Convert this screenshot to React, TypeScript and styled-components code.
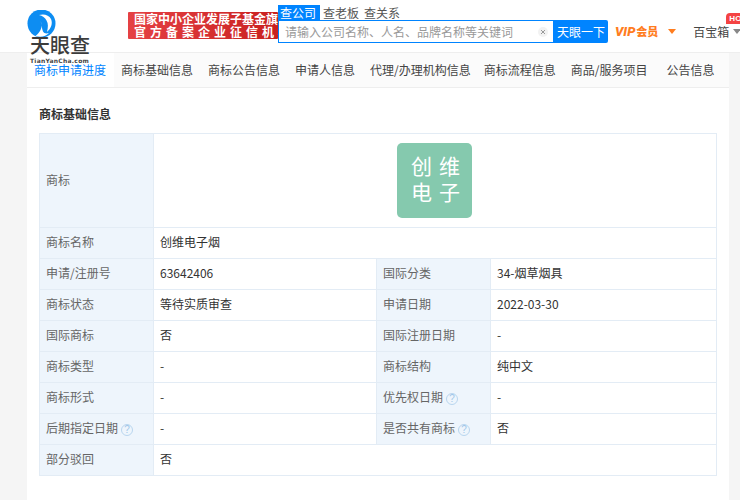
import React from 'react';
import styled, { createGlobalStyle } from 'styled-components';

const GlobalStyle = createGlobalStyle`
  html, body { margin: 0; padding: 0; background: #f5f5f5; }
  body {
    width: 740px;
    height: 500px;
    overflow: hidden;
    font-family: "Noto Sans CJK SC", "Liberation Sans", sans-serif;
    font-size: 12px;
    color: #333;
  }
`;

const Header = styled.header`
  display: flex;
  align-items: flex-start;
  height: 53px;
  background: #fff;
  border-bottom: 1px solid #eee;
  box-sizing: border-box;
  overflow: visible;
  position: relative;
  z-index: 1;
`;

const LogoWrap = styled.div`
  position: relative;
  flex: 0 0 128px;
  height: 53px;
`;

const LogoMark = styled.svg`
  position: absolute;
  left: 27px;
  top: 10px;
`;

const LogoName = styled.div`
  position: absolute;
  left: 30px;
  top: 34px;
  font-size: 20px;
  line-height: 22px;
  font-weight: 500;
  color: #3c3c3c;
  white-space: nowrap;
`;

const LogoPinyin = styled.div`
  position: absolute;
  left: 30px;
  top: 56px;
  font-family: "DejaVu Sans", sans-serif;
  font-size: 6px;
  line-height: 9px;
  font-weight: 700;
  letter-spacing: 0.25px;
  color: #444;
  white-space: nowrap;
`;

const Banner = styled.div`
  flex: 0 0 150px;
  width: 150px;
  height: 27px;
  margin-top: 12px;
  padding: 1px 0 0 6px;
  box-sizing: border-box;
  overflow: hidden;
  border-radius: 1px;
  background: linear-gradient(90deg, #e54144, #c9201f);
  color: #fff;
  font-weight: 700;
`;

const BannerLine = styled.div<{ $spread?: boolean }>`
  font-size: 12px;
  line-height: 12.5px;
  white-space: nowrap;
  letter-spacing: ${(p) => (p.$spread ? '4px' : '0')};
`;

const Search = styled.div`
  flex: 0 0 330px;
  margin-top: 5px;
`;

const SearchTabs = styled.div`
  display: flex;
  gap: 5px;
  height: 15px;
`;

const SearchTab = styled.span<{ $active?: boolean }>`
  padding: ${(p) => (p.$active ? '0 4px 0 2px' : '0')};
  margin-right: ${(p) => (p.$active ? '-2px' : '0')};
  background: ${(p) => (p.$active ? '#0084ff' : 'transparent')};
  color: ${(p) => (p.$active ? '#fff' : '#555')};
  font-size: 12px;
  line-height: 15px;
  white-space: nowrap;
`;

const SearchRow = styled.div`
  display: flex;
  height: 23px;
`;

const InputBox = styled.div`
  flex: 0 0 276px;
  display: flex;
  align-items: center;
  justify-content: space-between;
  box-sizing: border-box;
  padding: 0 5px 0 6px;
  border: 1px solid #0084ff;
  background: #fff;
`;

const Placeholder = styled.span`
  color: #999;
  font-size: 12px;
  white-space: nowrap;
`;

const ClearIcon = styled.svg`
  display: block;
`;

const SearchButton = styled.button`
  flex: 0 0 54px;
  padding: 0;
  border: none;
  border-radius: 0 2px 2px 0;
  background: #0084ff;
  color: #fff;
  font: inherit;
  font-size: 12px;
  white-space: nowrap;
`;

const Vip = styled.div`
  display: flex;
  align-items: center;
  margin: 21px 0 0 7px;
  height: 20px;
  color: #ff7d1f;
  font-weight: 700;
  white-space: nowrap;
`;

const VipLatin = styled.span`
  font-family: Roboto, "Liberation Sans", sans-serif;
  font-size: 13px;
  font-weight: 900;
  font-style: italic;
  margin-right: 1px;
`;

const VipLabel = styled.span`
  font-size: 11px;
  font-weight: 900;
`;

const Caret = styled.i<{ $color: string; $gap: number }>`
  display: block;
  margin-left: ${(p) => p.$gap}px;
  width: 0;
  height: 0;
  border-style: solid;
  border-width: 5px 4px 0;
  border-color: ${(p) => p.$color} transparent transparent;
`;

const Divider = styled.i`
  display: block;
  width: 1px;
  height: 14px;
  margin: 24px 8px 0 8px;
  background: #eee;
`;

const Toolbox = styled.div`
  position: relative;
  display: flex;
  align-items: center;
  height: 20px;
  margin: 21px 0 0 1px;
  color: #444;
  white-space: nowrap;
`;

const HotBadge = styled.span`
  position: absolute;
  left: 33px;
  top: -8px;
  width: 30px;
  height: 11px;
  padding-left: 3px;
  box-sizing: border-box;
  border-radius: 4px 4px 4px 0;
  background: #f44343;
  color: #fff;
  font-family: "Liberation Sans", sans-serif;
  font-size: 8px;
  font-weight: 700;
  line-height: 11px;
`;

const Panel = styled.main`
  margin: 0 11px 0 27px;
  height: 447px;
  background: #fff;
`;

const Nav = styled.nav`
  display: flex;
  height: 35px;
  box-sizing: border-box;
  padding-right: 13px;
  background: #fbfbfb;
  border-bottom: 1px solid #eee;
`;

const NavItem = styled.a<{ $active?: boolean; $offset?: number }>`
  display: block;
  padding: 0 7.5px 0 ${(p) => (p.$active ? '7px' : '7.5px')};
  margin-right: ${(p) => p.$offset ?? 0}px;
  background: ${(p) => (p.$active ? '#fff' : 'transparent')};
  color: ${(p) => (p.$active ? '#0084ff' : '#444')};
  font-size: 12px;
  line-height: 34px;
  white-space: nowrap;
`;

const Body = styled.section`
  padding: 17px 12px 0;
`;

const SectionTitle = styled.h2`
  margin: 0 0 11px;
  font-size: 12px;
  line-height: 17px;
  font-weight: 700;
  color: #333;
`;

const Table = styled.table`
  width: 677px;
  table-layout: fixed;
  border-collapse: collapse;
`;

const LabelCol = styled.col`
  width: 114px;
`;

const ValueCol = styled.col<{ $width: number }>`
  width: ${(p) => p.$width}px;
`;

const Th = styled.th`
  height: 31px;
  padding: 0 6px 3px;
  box-sizing: border-box;
  border: 1px solid #e3ecf5;
  background: #eef5fc;
  color: #666;
  font-weight: 400;
  font-size: 12px;
  text-align: left;
  white-space: nowrap;
`;

const Td = styled.td`
  height: 31px;
  padding: 0 6px 3px;
  box-sizing: border-box;
  border: 1px solid #e3ecf5;
  color: #333;
  font-size: 12px;
  white-space: nowrap;
`;

const MarkCell = styled(Td)`
  height: 94px;
  padding: 0 7px 0 6px;
`;

const Trademark = styled.div`
  width: 75px;
  height: 75px;
  margin: 0 auto;
  padding: 9px 0 0 14px;
  box-sizing: border-box;
  border-radius: 5px;
  background: #85c9ae;
  color: #fff;
  font-size: 21px;
  line-height: 26px;
  letter-spacing: 7px;
  text-align: left;
`;

const Help = styled.span`
  display: inline-block;
  width: 12px;
  height: 12px;
  margin-left: 3px;
  box-sizing: border-box;
  border: 1px solid #b9d6ef;
  border-radius: 50%;
  color: #a0c6e8;
  font-family: "Liberation Sans", sans-serif;
  font-size: 10px;
  line-height: 10px;
  text-align: center;
  vertical-align: 0;
`;

type Tab = { name: string; offset?: number };

const navItems: Tab[] = [
  { name: '商标基础信息' },
  { name: '商标公告信息' },
  { name: '申请人信息' },
  { name: '代理/办理机构信息', offset: -2 },
  { name: '商标流程信息' },
  { name: '商品/服务项目', offset: 4 },
];

type Cell = { label: string; value: string; help?: boolean };

const rows: [Cell, Cell][] = [
  [{ label: '申请/注册号', value: '63642406' }, { label: '国际分类', value: '34-烟草烟具' }],
  [{ label: '商标状态', value: '等待实质审查' }, { label: '申请日期', value: '2022-03-30' }],
  [{ label: '国际商标', value: '否' }, { label: '国际注册日期', value: '-' }],
  [{ label: '商标类型', value: '-' }, { label: '商标结构', value: '纯中文' }],
  [{ label: '商标形式', value: '-' }, { label: '优先权日期', value: '-', help: true }],
  [{ label: '后期指定日期', value: '-', help: true }, { label: '是否共有商标', value: '否', help: true }],
];

const Logo = () => (
  <LogoWrap>
    <LogoMark width="30" height="28" viewBox="0 0 30 28">
      <circle cx="14.500" cy="13.500" r="14" fill="#0d8df2" />
      <path d="M12 5c5-1.500 10 0 12 4 2 4.500 0 9.500-4 13 1-4.500 1.500-8.500-.5-11.500C18 7.500 15.500 6 12 5z" fill="#fff" />
      <path d="M13.500 11c1.500 3 1.500 6 0 9-1 2-2.500 4-5 6 5 1.500 10.500.5 13.500-3-2.500 1-5 .5-6-1.500-1.500-3-1-7-2.500-10.500z" fill="#fff" />
    </LogoMark>
    <LogoName>天眼查</LogoName>
    <LogoPinyin>TianYanCha.com</LogoPinyin>
  </LogoWrap>
);

const App: React.FC = () => (
  <>
    <GlobalStyle />
    <Header>
      <Logo />
      <Banner>
        <BannerLine>国家中小企业发展子基金旗下</BannerLine>
        <BannerLine $spread>官方备案企业征信机构</BannerLine>
      </Banner>
      <Search>
        <SearchTabs>
          <SearchTab $active>查公司</SearchTab>
          <SearchTab>查老板</SearchTab>
          <SearchTab>查关系</SearchTab>
        </SearchTabs>
        <SearchRow>
          <InputBox>
            <Placeholder>请输入公司名称、人名、品牌名称等关键词</Placeholder>
            <ClearIcon width="10" height="10" viewBox="0 0 10 10">
              <circle cx="5" cy="5" r="5" fill="#f2f2f2" />
              <path d="M3 3l4 4M7 3l-4 4" stroke="#999" strokeWidth="1" />
            </ClearIcon>
          </InputBox>
          <SearchButton>天眼一下</SearchButton>
        </SearchRow>
      </Search>
      <Vip>
        <VipLatin>VIP</VipLatin>
        <VipLabel>会员</VipLabel>
        <Caret $color="#ff7d1f" $gap={10} />
      </Vip>
      <Divider />
      <Toolbox>
        百宝箱
        <HotBadge>HOT</HotBadge>
        <Caret $color="#888" $gap={4} />
      </Toolbox>
    </Header>
    <Panel>
      <Nav>
        <NavItem $active>商标申请进度</NavItem>
        {navItems.map((item) => (
          <NavItem key={item.name} $offset={item.offset}>
            {item.name}
          </NavItem>
        ))}
        <NavItem>公告信息</NavItem>
      </Nav>
      <Body>
        <SectionTitle>商标基础信息</SectionTitle>
        <Table>
          <colgroup>
            <LabelCol />
            <ValueCol $width={223} />
            <LabelCol />
            <ValueCol $width={226} />
          </colgroup>
          <tbody>
            <tr>
              <Th>商标</Th>
              <MarkCell colSpan={3}>
                <Trademark>
                  创维
                  <br />
                  电子
                </Trademark>
              </MarkCell>
            </tr>
            <tr>
              <Th>商标名称</Th>
              <Td colSpan={3}>创维电子烟</Td>
            </tr>
            {rows.map(([a, b]) => (
              <tr key={a.label}>
                <Th>
                  {a.label}
                  {a.help && <Help>?</Help>}
                </Th>
                <Td>{a.value}</Td>
                <Th>
                  {b.label}
                  {b.help && <Help>?</Help>}
                </Th>
                <Td>{b.value}</Td>
              </tr>
            ))}
            <tr>
              <Th>部分驳回</Th>
              <Td colSpan={3}>否</Td>
            </tr>
          </tbody>
        </Table>
      </Body>
    </Panel>
  </>
);

export default App;
